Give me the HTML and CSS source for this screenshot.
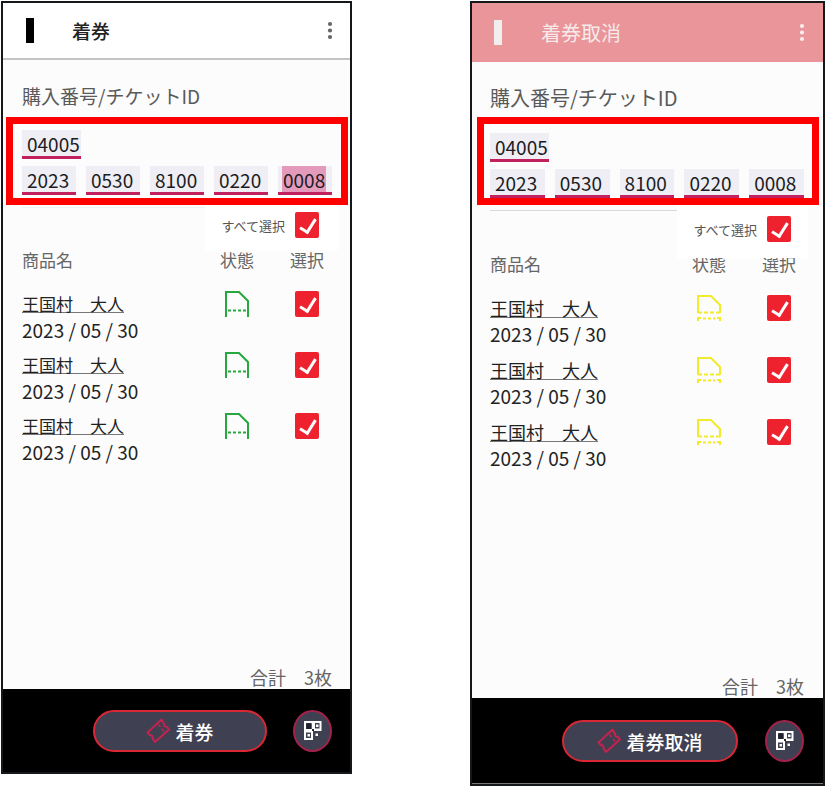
FILE: index.html
```
<!DOCTYPE html>
<html lang="ja">
<head>
  <meta charset="UTF-8" />
  <meta name="viewport" content="width=device-width, initial-scale=1.0" />
  <title>着券 / 着券取消</title>
  <link rel="stylesheet" href="styles.css">
</head>
<body>
  <!-- shared icons -->
  <svg class="sprite" aria-hidden="true">
    <symbol id="dots" viewBox="0 0 6 20">
      <circle cx="3" cy="3" r="2.1" /><circle cx="3" cy="9.5" r="2.1" /><circle cx="3" cy="16" r="2.1" />
    </symbol>
    <symbol id="valid" viewBox="0 0 24 26">
      <path d="M1 26V1h13l9 9v16" /><path d="M3 19.5h18" stroke-dasharray="3 2" />
    </symbol>
    <symbol id="used" viewBox="0 0 24 26">
      <path d="M1 18V1h13l9 9v8" /><path d="M1 17.5h22" stroke-dasharray="4 2" />
      <path d="M1 26v-3h3M23 26v-3h-3" /><path d="M6 23.5h12.5" stroke-dasharray="3 2" />
    </symbol>
    <symbol id="ticket" viewBox="0 0 24 26">
      <path d="M15.5 1.5 1.5 14.5l2.5 2.8c1.800-.6 3.200 1 2.400 2.800l2.600 3.900L23 11.500l-2.200-2.800c-1.800.5-3.200-1-2.600-2.800z" />
      <path class="thin" d="m12.500 6.500 2 2.500M16 11l2 2.500" />
    </symbol>
    <symbol id="qr" viewBox="0 0 18 20">
      <path fill-rule="evenodd" d="M0 0h17.500v10H9v9H0zM2 2v6h5.500V2zM11 2v5.500h4.500V2zM2 11.500v5.500h5v-5.500z" />
      <path d="M12 3.500h2.500v2.500H12zM3.500 13H6v2.500H3.500zM11.500 12.500H14V15h-2.500z" />
      <path class="qr-dark" d="M2.500 2.500h5v5.500h-5zM8 8h2v2H8z" />
    </symbol>
  </svg>

  <main class="screens">
    <section class="phone">
      <header class="topbar">
        <button class="back" aria-label="戻る"></button>
        <h1 class="title">着券</h1>
        <button class="menu" aria-label="メニュー"><svg><use href="#dots" /></svg></button>
      </header>

      <h2 class="label" id="idLabel1">購入番号/チケットID</h2>
      <div class="ids" role="group" aria-labelledby="idLabel1">
        <input class="id-first" type="text" value="04005" aria-label="購入番号">
        <div class="id-row">
          <input type="text" value="2023" aria-label="チケットID 1">
          <input type="text" value="0530" aria-label="チケットID 2">
          <input type="text" value="8100" aria-label="チケットID 3">
          <input type="text" value="0220" aria-label="チケットID 4">
          <input class="selected" type="text" value="0008" aria-label="チケットID 5">
        </div>
      </div>

      <div class="all-row">
        <label class="select-all">すべて選択 <input type="checkbox" checked></label>
      </div>
      <table class="items">
        <thead>
          <tr><th>商品名</th><th class="state">状態</th><th class="pick">選択</th></tr>
        </thead>
        <tbody>
          <tr>
            <td><a href="#">王国村　大人</a><span class="date">2023 / 05 / 30</span></td>
            <td class="state"><svg><use href="#valid" /></svg></td>
            <td class="pick"><input type="checkbox" aria-label="選択" checked></td>
          </tr>
          <tr>
            <td><a href="#">王国村　大人</a><span class="date">2023 / 05 / 30</span></td>
            <td class="state"><svg><use href="#valid" /></svg></td>
            <td class="pick"><input type="checkbox" aria-label="選択" checked></td>
          </tr>
          <tr>
            <td><a href="#">王国村　大人</a><span class="date">2023 / 05 / 30</span></td>
            <td class="state"><svg><use href="#valid" /></svg></td>
            <td class="pick"><input type="checkbox" aria-label="選択" checked></td>
          </tr>
        </tbody>
      </table>

      <p class="total">合計　3枚</p>
      <footer class="actions">
        <button class="btn"><svg><use href="#ticket" /></svg>着券</button>
        <button class="qr" aria-label="QRコード"><svg><use href="#qr" /></svg></button>
      </footer>
    </section>

    <section class="phone cancel">
      <header class="topbar">
        <button class="back" aria-label="戻る"></button>
        <h1 class="title">着券取消</h1>
        <button class="menu" aria-label="メニュー"><svg><use href="#dots" /></svg></button>
      </header>

      <h2 class="label" id="idLabel2">購入番号/チケットID</h2>
      <div class="ids" role="group" aria-labelledby="idLabel2">
        <input class="id-first" type="text" value="04005" aria-label="購入番号">
        <div class="id-row">
          <input type="text" value="2023" aria-label="チケットID 1">
          <input type="text" value="0530" aria-label="チケットID 2">
          <input type="text" value="8100" aria-label="チケットID 3">
          <input type="text" value="0220" aria-label="チケットID 4">
          <input type="text" value="0008" aria-label="チケットID 5">
        </div>
      </div>

      <div class="all-row">
        <label class="select-all">すべて選択 <input type="checkbox" checked></label>
      </div>
      <table class="items">
        <thead>
          <tr><th>商品名</th><th class="state">状態</th><th class="pick">選択</th></tr>
        </thead>
        <tbody>
          <tr>
            <td><a href="#">王国村　大人</a><span class="date">2023 / 05 / 30</span></td>
            <td class="state"><svg><use href="#used" /></svg></td>
            <td class="pick"><input type="checkbox" aria-label="選択" checked></td>
          </tr>
          <tr>
            <td><a href="#">王国村　大人</a><span class="date">2023 / 05 / 30</span></td>
            <td class="state"><svg><use href="#used" /></svg></td>
            <td class="pick"><input type="checkbox" aria-label="選択" checked></td>
          </tr>
          <tr>
            <td><a href="#">王国村　大人</a><span class="date">2023 / 05 / 30</span></td>
            <td class="state"><svg><use href="#used" /></svg></td>
            <td class="pick"><input type="checkbox" aria-label="選択" checked></td>
          </tr>
        </tbody>
      </table>

      <p class="total">合計　3枚</p>
      <footer class="actions">
        <button class="btn"><svg><use href="#ticket" /></svg>着券取消</button>
        <button class="qr" aria-label="QRコード"><svg><use href="#qr" /></svg></button>
      </footer>
    </section>
  </main>
</body>
</html>
```
FILE: styles.css
```
* {
  box-sizing: border-box;
}
body {
  margin: 0;
  background: #fff;
  color: #222;
  font-family: "Noto Sans CJK JP", sans-serif;
  font-size: 19px;
}
h1, h2, p {
  margin: 0;
  font-weight: normal;
}
button {
  padding: 0;
  border: none;
  background: none;
  font-family: inherit;
  cursor: pointer;
}
.sprite {
  display: none;
}
.screens {
  display: grid;
  grid-template-columns: minmax(0, 351fr) minmax(0, 355fr);
  align-items: start;
  gap: 118px;
  padding: 1px 1px 0;
}
.phone {
  display: flex;
  flex-direction: column;
  min-height: calc(100vh - 17px);
  border: 2px solid #14181a;
  background: #fcfcfc;
}

/* header */
.topbar {
  display: flex;
  align-items: center;
  height: 57px;
  padding: 0 17px 0 23px;
  background: #fff;
  border-bottom: 2px solid #c4c4c4;
}
.back {
  width: 8px;
  height: 25px;
  margin-right: 38px;
  background: #000;
}
.title {
  flex: 1;
  font-size: 19px;
  font-weight: 500;
}
.menu svg {
  display: block;
  width: 6px;
  height: 20px;
  fill: #666;
}
.label {
  padding: 21px 19px 6px;
  font-size: 19px;
  line-height: 30px;
  color: #5a5a5a;
}

/* id fields */
.ids {
  margin: 0 2px 0 3px;
  padding: 6px 9px 3px;
  border: 7px solid #f00;
}
.ids input {
  display: block;
  width: 100%;
  height: 29px;
  padding: 0 0 0 5px;
  border: none;
  border-bottom: 3px solid #c2215f;
  border-radius: 0;
  background: #eeeef4;
  color: #1c1c22;
  font-family: inherit;
  font-size: 19px;
}
.ids .id-first {
  width: 59px;
  margin-bottom: 7px;
}
.id-row {
  display: grid;
  grid-template-columns: repeat(5, 1fr);
  gap: 10px;
}
.ids .selected {
  background: linear-gradient(#e39abb, #e39abb) 4px 0 / 44px 100% no-repeat #eeeef4;
}

/* check boxes */
input[type="checkbox"] {
  appearance: none;
  flex: none;
  width: 24px;
  height: 26px;
  margin: 0;
  border-radius: 2px;
  background: #ee222f;
}
input[type="checkbox"]:checked::before {
  content: "";
  display: block;
  width: 7px;
  height: 14px;
  margin: 4px 0 0 8px;
  border: solid #fff;
  border-width: 0 3px 3px 0;
  transform: rotate(32deg);
}
.all-row {
  display: flex;
  justify-content: flex-end;
  padding-right: 12px;
}
.all-row::before {
  content: "";
  flex: 1;
  height: 2px;
  margin-left: 19px;
  border-bottom: 1px solid #f2f2f2;
}
.select-all {
  position: relative;
  z-index: 1;
  display: flex;
  align-items: center;
  gap: 10px;
  padding: 7px 19px 12px 16px;
  background: #fff;
  color: #555;
  font-size: 13px;
}

/* item list */
.items {
  width: calc(100% - 37px);
  margin-left: 19px;
  border-collapse: collapse;
  table-layout: fixed;
  line-height: 26px;
}
.items th {
  padding: 0 0 21px;
  color: #666;
  font-size: 17px;
  font-weight: normal;
  line-height: 20px;
  text-align: left;
}
.items td {
  padding: 0 0 9px;
  vertical-align: top;
}
.items a {
  display: table;
  color: #222;
  font-size: 17px;
  text-decoration-color: #777;
  text-decoration-thickness: 1px;
  text-underline-offset: 1px;
}
.date {
  display: block;
}
.items .state, .items .pick {
  text-align: center;
}
.state {
  width: 90px;
}
.pick {
  width: 50px;
}
.state svg, .items input {
  display: block;
  width: 24px;
  height: 26px;
  margin: 0 auto;
}
.state svg {
  fill: none;
  stroke: #27a83f;
  stroke-width: 2;
}

/* bottom */
.total {
  margin-top: auto;
  padding: 0 18px 1px 0;
  color: #666;
  font-size: 18px;
  line-height: 22px;
  text-align: right;
}
.actions {
  display: flex;
  justify-content: flex-end;
  gap: 26px;
  padding: 21px 18px 20px;
  background: #000;
}
.btn {
  display: flex;
  justify-content: center;
  align-items: center;
  gap: 5px;
  width: 174px;
  height: 42px;
  border: 2px solid #d92833;
  border-radius: 21px;
  background: #3f4052;
  color: #fff;
  font-size: 19px;
  font-weight: 500;
}
.btn svg {
  width: 24px;
  height: 26px;
  fill: none;
  stroke: #c4234f;
  stroke-width: 2;
  stroke-linejoin: round;
}
.thin {
  stroke-width: 1.5;
}
.qr {
  display: grid;
  place-items: center;
  width: 39px;
  height: 42px;
  border: 2px solid #a3224a;
  border-radius: 50%;
  background: #3f4052;
}
.qr svg {
  width: 18px;
  height: 20px;
  fill: #fff;
}
.qr-dark {
  fill: #22222c;
}

/* cancel screen */
.cancel {
  min-height: calc(100vh - 5px);
}
.cancel .topbar {
  height: 59px;
  padding: 0 18px 0 22px;
  border-bottom: none;
  background: #e99599;
  color: #f6e9ea;
}
.cancel .back {
  margin-right: 39px;
  background: #f1eeee;
}
.cancel .menu svg {
  fill: #f8eded;
}
.cancel .title, .cancel .label {
  font-size: 20px;
}
.cancel .title {
  font-weight: normal;
}
.cancel .label {
  padding: 21px 18px 4px;
}
.cancel .ids {
  margin: 0 4px 0 5px;
  padding: 9px 8px 0 6px;
}
.cancel .all-row {
  padding-right: 15px;
}
.cancel .all-row::before {
  height: 5px;
  margin-left: 18px;
  border-color: #d8d8d8;
}
.cancel .select-all {
  padding: 11px 17px 16px 16px;
}
.cancel .items {
  margin: -4px 0 0 18px;
}
.cancel .items th {
  padding-bottom: 21px;
}
.cancel .items td {
  padding-bottom: 10px;
}
.cancel .items a {
  font-size: 18px;
}
.cancel .state svg {
  stroke: #f3ea2a;
}
.cancel .total {
  padding-right: 19px;
}
.cancel .actions {
  gap: 27px;
  padding: 22px 19px 21px;
  border-bottom: 1px solid #777;
}
.cancel .btn {
  width: 176px;
}
```
